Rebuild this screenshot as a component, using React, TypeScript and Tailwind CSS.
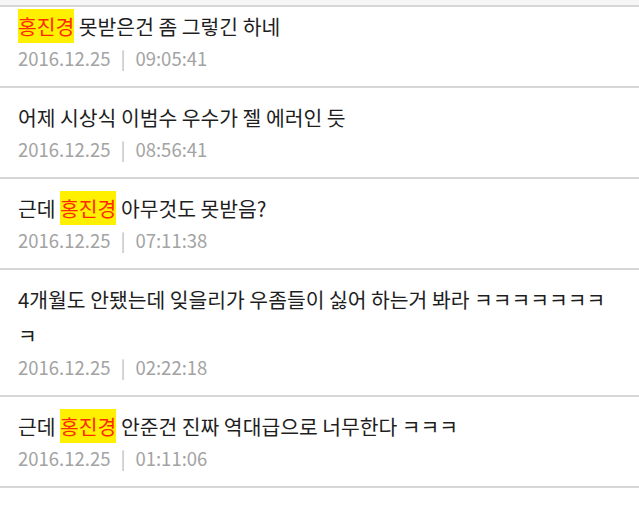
import React from 'react';

type Comment = {
  id: number;
  // text pieces; `hl` pieces get the keyword highlight
  parts: { text: string; hl?: boolean }[];
  date: string;
  time: string;
};

const KEYWORD = '홍진경';

const COMMENTS: Comment[] = [
  {
    id: 1,
    parts: [{ text: KEYWORD, hl: true }, { text: ' 못받은건 좀 그렇긴 하네' }],
    date: '2016.12.25',
    time: '09:05:41',
  },
  {
    id: 2,
    parts: [{ text: '어제 시상식 이범수 우수가 젤 에러인 듯' }],
    date: '2016.12.25',
    time: '08:56:41',
  },
  {
    id: 3,
    parts: [{ text: '근데 ' }, { text: KEYWORD, hl: true }, { text: ' 아무것도 못받음?' }],
    date: '2016.12.25',
    time: '07:11:38',
  },
  {
    id: 4,
    parts: [{ text: '4개월도 안됐는데 잊을리가 우좀들이 싫어 하는거 봐라 ㅋㅋㅋㅋㅋㅋㅋㅋ' }],
    date: '2016.12.25',
    time: '02:22:18',
  },
  {
    id: 5,
    parts: [{ text: '근데 ' }, { text: KEYWORD, hl: true }, { text: ' 안준건 진짜 역대급으로 너무한다 ㅋㅋㅋ' }],
    date: '2016.12.25',
    time: '01:11:06',
  },
];

function CommentRow({ comment, first }: { comment: Comment; first?: boolean }) {
  return (
    <li className={`border-b-2 border-[#d6d6d6] bg-white pl-[18px] pr-6 pb-[14px] ${first ? 'pt-px' : 'pt-[11px]'}`}>
      <p className="text-[20.4px] leading-[36px] text-[#1e1e1e]">
        {comment.parts.map((p, i) =>
          p.hl ? (
            <span key={i} className="bg-[#fff000] py-[2px] text-[#ff2a00]">
              {p.text}
            </span>
          ) : (
            <span key={i}>{p.text}</span>
          )
        )}
      </p>
      <div className="flex items-center text-[18.5px] leading-[28px] text-[#a3a3a3]">
        <span>{comment.date}</span>
        <span className="mx-[10px] text-[#bdbdbd]">|</span>
        <span>{comment.time}</span>
      </div>
    </li>
  );
}

export default function App() {
  return (
    <div
      className="min-h-screen bg-white"
      style={{ fontFamily: '"Noto Sans CJK KR", "Noto Sans", sans-serif' }}
    >
      <div className="box-content h-[5px] border-b-2 border-[#d6d6d6] bg-[#f6f6f6]" />
      <ul>
        {COMMENTS.map((c, i) => (
          <CommentRow key={c.id} comment={c} first={i === 0} />
        ))}
      </ul>
    </div>
  );
}
